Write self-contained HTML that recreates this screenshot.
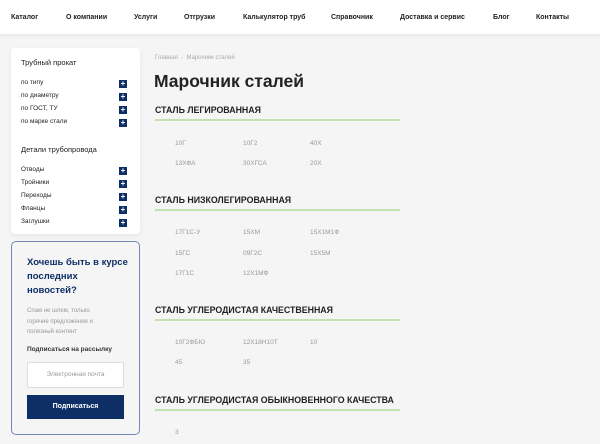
<!DOCTYPE html><html><head><meta charset="utf-8"><style>
*{margin:0;padding:0;box-sizing:border-box}
body{width:600px;height:444px;overflow:hidden;background:#f5f5f5;font-family:"Liberation Sans",sans-serif;position:relative;color:#222}
.a{position:absolute;white-space:nowrap}
.hdr{position:absolute;left:0;top:0;width:600px;height:34px;background:#fff;box-shadow:0 2px 4px rgba(0,0,0,.06)}
.nav{font-size:7px;font-weight:bold;color:#222;top:14px}
.card{position:absolute;left:11px;top:48px;width:129px;height:186px;background:#fff;border-radius:4px;box-shadow:0 2px 6px rgba(0,0,0,.06)}
.sb{font-size:6.5px;color:#222}
.pl{position:absolute;width:8px;height:8px;background:#0e2f66;color:#fff;font-size:8px;line-height:8px;text-align:center;font-weight:bold}
.sub{position:absolute;left:11px;top:241px;width:129px;height:194px;border:1px solid #7188b4;border-radius:5px;background:#f5f5f5}
.h2{font-size:8.8px;font-weight:bold;color:#222;left:155px}
.ln{position:absolute;left:155px;width:245px;height:2px;background:#c3e2b4}
.it{font-size:6.5px;color:#999}
</style></head><body>
<div class="hdr"></div>
<div class="a nav" style="left:11px">Каталог</div>
<div class="a nav" style="left:66px">О компании</div>
<div class="a nav" style="left:134px">Услуги</div>
<div class="a nav" style="left:184px">Отгрузки</div>
<div class="a nav" style="left:243px">Калькулятор труб</div>
<div class="a nav" style="left:331px">Справочник</div>
<div class="a nav" style="left:400px">Доставка и сервис</div>
<div class="a nav" style="left:493px">Блог</div>
<div class="a nav" style="left:536px">Контакты</div>

<div class="card"></div>
<div class="a" style="left:21px;top:58px;font-size:7.5px">Трубный прокат</div>
<div class="a sb" style="left:21px;top:79px">по типу</div>
<div class="a sb" style="left:21px;top:92px">по диаметру</div>
<div class="a sb" style="left:21px;top:105px">по ГОСТ, ТУ</div>
<div class="a sb" style="left:21px;top:118px">по марке стали</div>
<div class="a" style="left:21px;top:145px;font-size:7.5px">Детали трубопровода</div>
<div class="a sb" style="left:21px;top:166px">Отводы</div>
<div class="a sb" style="left:21px;top:179px">Тройники</div>
<div class="a sb" style="left:21px;top:192px">Переходы</div>
<div class="a sb" style="left:21px;top:205px">Фланцы</div>
<div class="a sb" style="left:21px;top:218px">Заглушки</div>
<div class="pl" style="left:119px;top:80px">+</div>
<div class="pl" style="left:119px;top:93px">+</div>
<div class="pl" style="left:119px;top:106px">+</div>
<div class="pl" style="left:119px;top:119px">+</div>
<div class="pl" style="left:119px;top:167px">+</div>
<div class="pl" style="left:119px;top:180px">+</div>
<div class="pl" style="left:119px;top:193px">+</div>
<div class="pl" style="left:119px;top:206px">+</div>
<div class="pl" style="left:119px;top:219px">+</div>

<div class="sub"></div>
<div class="a" style="left:27px;top:256px;font-size:9.5px;font-weight:bold;color:#0e2f66;line-height:14px;white-space:normal;width:102px">Хочешь быть в курсе последних новостей?</div>
<div class="a" style="left:27px;top:306px;font-size:6px;color:#999;line-height:10.5px;white-space:normal;width:85px">Спам не шлем, только горячие предложения и полезный контент</div>
<div class="a" style="left:27px;top:346px;font-size:6.5px;font-weight:bold;color:#333">Подписаться на рассылку</div>
<div class="a" style="left:27px;top:362px;width:97px;height:26px;background:#fff;border:1px solid #ddd;border-radius:2px;font-size:6.5px;color:#999;text-align:center;line-height:24px">Электронная почта</div>
<div class="a" style="left:27px;top:395px;width:97px;height:24px;background:#0e2f66;color:#fff;font-size:7px;font-weight:bold;text-align:center;line-height:24px">Подписаться</div>

<div class="a" style="left:155px;top:55px;font-size:6px;color:#aaa">Главная &nbsp;-&nbsp; Марочник сталей</div>
<div class="a" style="left:154px;top:71px;font-size:17.5px;font-weight:bold;color:#222">Марочник сталей</div>

<div class="a h2" style="top:105px">СТАЛЬ ЛЕГИРОВАННАЯ</div><div class="ln" style="top:119px"></div>
<div class="a it" style="left:175px;top:140px">10Г</div><div class="a it" style="left:243px;top:140px">10Г2</div><div class="a it" style="left:310px;top:140px">40Х</div>
<div class="a it" style="left:175px;top:160px">13ХФА</div><div class="a it" style="left:243px;top:160px">30ХГСА</div><div class="a it" style="left:310px;top:160px">20Х</div>

<div class="a h2" style="top:195px">СТАЛЬ НИЗКОЛЕГИРОВАННАЯ</div><div class="ln" style="top:209px"></div>
<div class="a it" style="left:175px;top:229px">17Г1С-У</div><div class="a it" style="left:243px;top:229px">15ХМ</div><div class="a it" style="left:310px;top:229px">15Х1М1Ф</div>
<div class="a it" style="left:175px;top:250px">15ГС</div><div class="a it" style="left:243px;top:250px">09Г2С</div><div class="a it" style="left:310px;top:250px">15Х5М</div>
<div class="a it" style="left:175px;top:270px">17Г1С</div><div class="a it" style="left:243px;top:270px">12Х1МФ</div>

<div class="a h2" style="top:305px">СТАЛЬ УГЛЕРОДИСТАЯ КАЧЕСТВЕННАЯ</div><div class="ln" style="top:319px"></div>
<div class="a it" style="left:175px;top:339px">10Г2ФБЮ</div><div class="a it" style="left:243px;top:339px">12Х18Н10Т</div><div class="a it" style="left:310px;top:339px">10</div>
<div class="a it" style="left:175px;top:359px">45</div><div class="a it" style="left:243px;top:359px">35</div>

<div class="a h2" style="top:395px">СТАЛЬ УГЛЕРОДИСТАЯ ОБЫКНОВЕННОГО КАЧЕСТВА</div><div class="ln" style="top:409px"></div>
<div class="a it" style="left:175px;top:429px">3</div>
</body></html>
